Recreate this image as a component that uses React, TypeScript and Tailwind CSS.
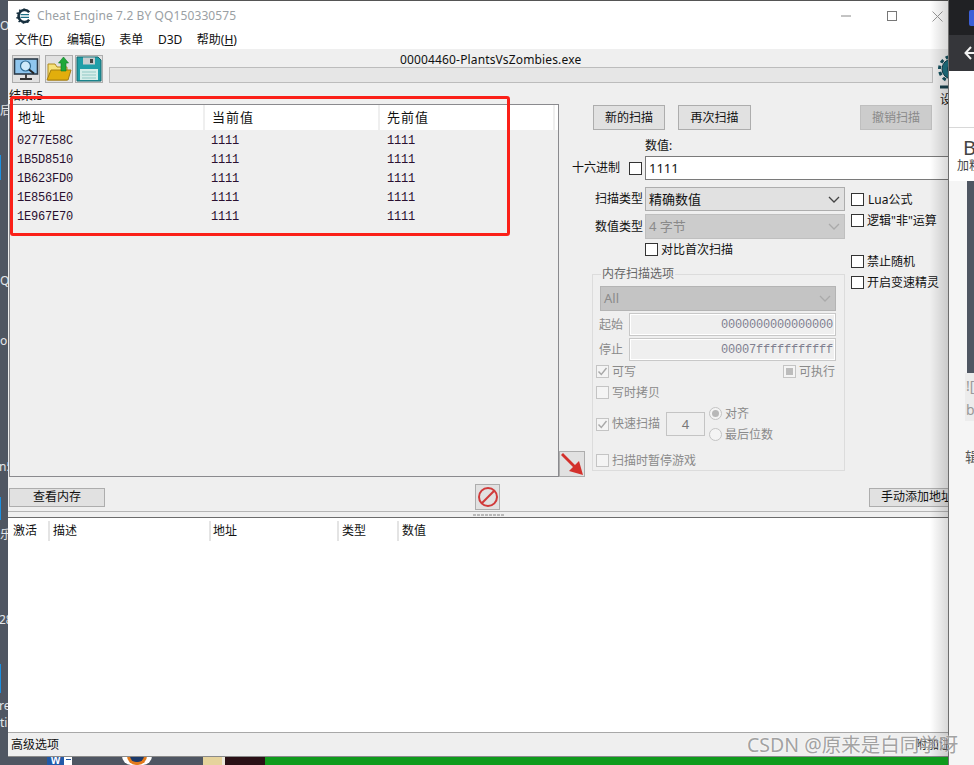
import React from 'react';

const ROWS = ['0277E58C', '1B5D8510', '1B623FD0', '1E8561E0', '1E967E70'];

const Check = ({ mark, off, className = '' }: { mark?: 'tick' | 'square'; off?: boolean; className?: string }) => (
  <span className={`flex h-[13px] w-[13px] shrink-0 items-center justify-center border ${off ? 'border-[#c4c4c4] bg-[#f4f4f4]' : 'border-[#333] bg-white'} ${className}`}>
    {mark === 'tick' && (
      <svg width="11" height="11" viewBox="0 0 11 11" fill="none" stroke="#a8a8a8" strokeWidth="1.4">
        <path d="M1.5 5.5 L4.3 8.5 L9.5 2" />
      </svg>
    )}
    {mark === 'square' && <span className="h-[7px] w-[7px] bg-[#bcbcbc]" />}
  </span>
);

const Btn = ({ children, className = '', off }: { children: React.ReactNode; className?: string; off?: boolean }) => (
  <div className={`flex shrink-0 items-center justify-center border ${off ? 'border-[#bfbfbf] bg-[#cccccc] text-[#8a8a8a]' : 'border-[#adadad] bg-[#e1e1e1] text-[#111]'} ${className}`}>
    {children}
  </div>
);

const Chevron = ({ color }: { color: string }) => (
  <svg width="12" height="7" viewBox="0 0 12 7" fill="none" stroke={color} strokeWidth="1.3" className="ml-auto mr-[4px]">
    <path d="M1 1 L6 6 L11 1" />
  </svg>
);

// the toothed "C" of the Cheat Engine logo
const CeLogo = () => (
  <svg width="16" height="16" viewBox="0 0 16 16" fill="none" className="shrink-0">
    <path d="M13.2 4.2 A6 6 0 1 0 13.2 11.8" stroke="#17303f" strokeWidth="2.6" />
    <path d="M8 0.4 V2 M3.4 1.6 L4.4 3 M0.6 5 L2.2 5.6 M0.4 10 L2 9.6 M2.6 14 L4 12.8 M7.4 15.8 V14 M12 14.8 L11.4 13.4" stroke="#17303f" strokeWidth="1.6" />
    <path d="M4.5 6.6 H13 M4.5 9.4 H13" stroke="#1d6f86" strokeWidth="1.4" />
  </svg>
);

const GearIcon = () => (
  <svg width="28" height="34" viewBox="0 0 28 34" fill="none" className="shrink-0">
    <circle cx="14" cy="14" r="10" fill="#1f7383" stroke="#123f4c" />
    <circle cx="14" cy="14" r="12.5" stroke="#14505e" strokeWidth="3" strokeDasharray="3.5 3" />
    <circle cx="14" cy="14" r="5" fill="#14505e" />
    <path d="M2 32 H26" stroke="#17404c" strokeWidth="3" />
  </svg>
);

const MonitorIcon = () => (
  <svg width="26" height="26" viewBox="0 0 26 26">
    <rect x="1.5" y="3" width="23" height="15" fill="#8fc6ee" stroke="#2b3a48" strokeWidth="1.6" />
    <circle cx="12.5" cy="10" r="5" fill="#cfeafa" stroke="#2e6b94" strokeWidth="1.2" />
    <path d="M16 13.5 L21 17.5" stroke="#222" strokeWidth="2" />
    <path d="M13 18 V22" stroke="#444" strokeWidth="2" />
    <path d="M7 23 H19" stroke="#333" strokeWidth="2" />
  </svg>
);

const FolderIcon = () => (
  <svg width="26" height="26" viewBox="0 0 26 26">
    <path d="M2 8 H9 L11 11 H21 V24 H2 Z" fill="#f6e27a" stroke="#b08a1c" />
    <path d="M1 24 L5 14 H25 L22 24 Z" fill="#e2ae0c" stroke="#a67f10" />
    <path d="M17.5 1 L22.5 7 H20 V15 H15 V7 H12.5 Z" fill="#1fa83a" stroke="#0e7a26" strokeWidth="0.6" />
  </svg>
);

const DiskIcon = () => (
  <svg width="26" height="26" viewBox="0 0 26 26">
    <path d="M1 1 H22 L25 4 V25 H1 Z" fill="#1f9ea8" stroke="#14686e" />
    <rect x="7" y="1.5" width="12" height="7" fill="#c9ced0" />
    <rect x="14" y="3" width="3" height="4" fill="#444" />
    <rect x="4" y="13" width="18" height="11" fill="#d6eeea" />
    <path d="M6 16 H20 M6 19 H20 M6 22 H20" stroke="#8fc8c4" />
  </svg>
);

export default function App() {
  return (
    <div className="relative h-[765px] w-[974px] overflow-hidden bg-[#4f5662] font-['Noto_Sans','Noto_Sans_CJK_SC',sans-serif] text-[12px] leading-none text-[#111]">
      {/* desktop scraps on the left */}
      <div className="absolute left-0 top-0 h-[765px] w-[8px] text-[12px] text-[#e4e6ea]">
        <span className="absolute left-0 top-[20px]">O</span>
        <span className="absolute left-0 top-[105px]">后</span>
        <span className="absolute left-0 top-[275px]">Q</span>
        <span className="absolute left-0 top-[335px]">o</span>
        <span className="absolute left-[-1px] top-[461px]">n5</span>
        <span className="absolute left-0 top-[529px]">乐</span>
        <span className="absolute left-[-1px] top-[614px]">28</span>
        <span className="absolute left-[-1px] top-[700px]">re</span>
        <span className="absolute left-0 top-[717px]">ti</span>
        <span className="absolute left-0 top-[155px] h-[25px] w-[1px] bg-[#1a8fe0]" />
        <span className="absolute left-0 top-[497px] h-[23px] w-[1px] bg-[#1a8fe0]" />
        <span className="absolute left-0 top-[664px] h-[29px] w-[1px] bg-[#1a8fe0]" />
      </div>

      {/* taskbar peeking out under the window */}
      <div className="absolute bottom-0 left-0 flex h-[9px] w-[949px]">
        <div className="ml-[47px] flex w-[25px] gap-[2px] overflow-hidden bg-white">
          <span className="w-[17px] bg-[#2159a8] text-center text-[10px] font-bold leading-[9px] text-white">W</span>
          <span className="mt-[3px] h-[1px] w-[5px] bg-[#2159a8]" />
        </div>
        <div className="ml-[50px] flex w-[30px] items-start justify-center rounded-b-full bg-white">
          <span className="h-[9px] w-[20px] rounded-b-full border-[3px] border-t-0 border-[#e27a1c] bg-[#1d3a6a]" />
        </div>
        <div className="ml-[51px] w-[19px] bg-[#e6d39c]" />
        <div className="w-[3px] bg-[#ece8dc]" />
        <div className="w-[40px] bg-[#2a1016]" />
        <div className="flex-1 bg-[#0f9a1c]" />
      </div>

      {/* browser window behind, right side */}
      <div className="absolute left-[948px] top-0 flex h-[765px] w-[26px] flex-col border-l border-[#6e6e6e] bg-[#f5f5f5] text-[#555]">
        <div className="h-[35px] bg-[#202124] pl-[20px] pt-[10px]">
          <div className="h-[16px] w-[8px] rounded-l-[2px] bg-[#3b5fd8]" />
        </div>
        <div className="flex h-[36px] items-center bg-[#35363a] pl-[15px]">
          <svg width="11" height="14" viewBox="0 0 11 14" fill="none" stroke="#f2f2f2" strokeWidth="2" className="shrink-0">
            <path d="M7 1 L1.5 7 L7 13 M2 7 H12" />
          </svg>
        </div>
        <div className="h-[57px] border-b border-[#d8d8d8] bg-white" />
        <div className="h-[53px] bg-white pl-[14px] pt-[10px] text-[#444]">
          <div className="text-[20px]">B</div>
          <div className="ml-[-6px] mt-[2px] whitespace-nowrap text-[12px]">加粗</div>
        </div>
        <div className="ml-[18px] h-[192px] shrink-0 bg-[#4f5662]" />
        <div className="ml-[16px] h-[48px] shrink-0 whitespace-nowrap bg-[#ececec] pl-[1px] pt-[6px] text-[14px] text-[#999]">
          <div>![</div>
          <div className="mt-[10px]">b</div>
        </div>
        <div className="ml-[16px] mt-[29px] whitespace-nowrap text-[14px]">辑</div>
      </div>

      {/* Cheat Engine window */}
      <div className="absolute left-[8px] top-0 flex h-[757px] w-[940px] flex-col overflow-hidden border-b border-t border-b-[#8a8a8a] border-t-[#555] bg-white">
        <div className="flex h-[30px] shrink-0 items-center pl-[8px]">
          <CeLogo />
          <span className="ml-[5px] text-[12px] tracking-[0.1px] text-[#9aa0a4]">Cheat Engine 7.2 BY QQ150330575</span>
          <svg width="12" height="2" viewBox="0 0 12 2" className="ml-[605px]"><path d="M0 1 H10" stroke="#888" /></svg>
          <svg width="10" height="10" viewBox="0 0 10 10" className="ml-[34px]"><rect x="0.5" y="0.5" width="9" height="9" fill="none" stroke="#777" /></svg>
          <svg width="11" height="11" viewBox="0 0 11 11" className="ml-[35px] shrink-0"><path d="M0.5 0.5 L10.5 10.5 M10.5 0.5 L0.5 10.5" stroke="#999" /></svg>
        </div>
        <div className="flex h-[18px] shrink-0 items-center gap-[14.5px] pl-[7px] text-[12px]">
          <span>文件(<u>F</u>)</span>
          <span>编辑(<u>E</u>)</span>
          <span>表单</span>
          <span>D3D</span>
          <span>帮助(<u>H</u>)</span>
        </div>

        <div className="flex h-[468px] shrink-0 flex-col bg-[#efefef]">
          {/* toolbar */}
          <div className="flex h-[39px] shrink-0 pl-[4px] pt-[6px]">
            <Btn className="h-[28px] w-[28px]"><MonitorIcon /></Btn>
            <Btn className="ml-[5px] h-[28px] w-[28px]"><FolderIcon /></Btn>
            <Btn className="ml-[2px] h-[28px] w-[28px]"><DiskIcon /></Btn>
            <div className="ml-[6px] flex w-[824px] shrink-0 flex-col">
              <span className="ml-[291px] mt-[-1px] h-[13px] text-[12px] leading-[12px] tracking-[0.15px]">00004460-PlantsVsZombies.exe</span>
              <div className="h-[16px] w-full border border-[#bcbcbc] bg-[#e6e6e6]" />
            </div>
            <div className="ml-[5px] flex w-[28px] shrink-0 flex-col">
              <GearIcon />
              <span className="mt-[5px] whitespace-nowrap pl-[2px]">设置</span>
            </div>
          </div>
          <div className="h-[16px] shrink-0 pl-[1px] pt-[1px] leading-[14px]">结果:5</div>

          {/* found list + scan controls */}
          <div className="flex h-[373px] shrink-0">
            <div className="ml-[1px] flex w-[550px] shrink-0 flex-col border border-[#8a8a8e]">
              <div className="flex h-[25px] shrink-0 bg-white text-[13px] tracking-[1px]">
                <div className="flex w-[195px] items-center border-r-2 border-[#efefef] pl-[8px]">地址</div>
                <div className="flex w-[175px] items-center border-r-2 border-[#efefef] pl-[7px]">当前值</div>
                <div className="flex w-[175px] items-center border-r-2 border-[#efefef] pl-[7px]">先前值</div>
              </div>
              <div className="pt-[1px] font-['Liberation_Mono',monospace] text-[12px] tracking-[-0.2px] text-[#2a1030]">
                {ROWS.map((addr) => (
                  <div key={addr} className="flex h-[19px] items-center">
                    <span className="w-[195px] pl-[7px]">{addr}</span>
                    <span className="w-[175px] pl-[6px]">1111</span>
                    <span className="pl-[7px]">1111</span>
                  </div>
                ))}
              </div>
            </div>

            <div className="w-[389px] shrink-0 overflow-hidden">
              <div className="ml-[34px] mt-[1px] flex">
                <Btn className="h-[25px] w-[72px]">新的扫描</Btn>
                <Btn className="ml-[13px] h-[25px] w-[73px]">再次扫描</Btn>
                <Btn off className="ml-[109px] h-[25px] w-[72px]">撤销扫描</Btn>
              </div>

              <div className="mt-[10px] flex items-end">
                <div className="flex h-[24px] w-[86px] shrink-0 items-center pl-[13px]">
                  <span className="whitespace-nowrap">十六进制</span>
                  <Check className="ml-[9px]" />
                </div>
                <div className="w-[310px] shrink-0">
                  <div className="h-[16px]">数值:</div>
                  <div className="flex h-[24px] items-center border border-[#7a7a7a] bg-white pl-[3px] text-[13px]">1111</div>
                </div>
              </div>

              <div className="mt-[7px] flex">
                <div className="w-[286px] shrink-0">
                  <div className="flex h-[24px] items-center">
                    <span className="ml-[36px] w-[50px] whitespace-nowrap">扫描类型</span>
                    <div className="flex h-[24px] w-[200px] items-center border border-[#adadad] bg-[#e1e1e1] pl-[3px] text-[13px]">
                      精确数值
                      <Chevron color="#444" />
                    </div>
                  </div>
                  <div className="mt-[3px] flex h-[25px] items-center">
                    <span className="ml-[36px] w-[50px] whitespace-nowrap">数值类型</span>
                    <div className="flex h-[25px] w-[200px] items-center border border-[#bfbfbf] bg-[#cccccc] pl-[3px] text-[13px] text-[#8a8a8a]">
                      4 字节
                      <Chevron color="#aaa" />
                    </div>
                  </div>
                  <div className="ml-[86px] mt-[4px] flex h-[13px] items-center">
                    <Check />
                    <span className="ml-[3px]">对比首次扫描</span>
                  </div>

                  <div className="flex items-end">
                    <Btn className="h-[26px] w-[26px]">
                      <svg width="24" height="24" viewBox="0 0 24 24">
                        <path d="M1 3 L3 1 L15 13 L19 9 L23 23 L9 19 L13 15 Z" fill="#d3302c" />
                      </svg>
                    </Btn>
                    <div className="relative mb-[6px] ml-[7px] mt-[18px] h-[197px] w-[253px] whitespace-nowrap border border-[#dcdcdc] text-[#8a8a8a]">
                      <span className="absolute left-[8px] top-[-7px] bg-[#efefef] px-[1px] text-[#666]">内存扫描选项</span>
                      <div className="ml-[7px] mt-[11px] flex h-[25px] w-[236px] items-center border border-[#b4b4b4] bg-[#c4c4c4] pl-[3px] text-[13px]">
                        All
                        <Chevron color="#aaa" />
                      </div>
                      <div className="mt-[2px] flex h-[23px] items-center">
                        <span className="ml-[6px] w-[30px]">起始</span>
                        <div className="flex h-[23px] w-[207px] items-center justify-end border border-[#c8c8c8] pr-[2px] font-['Liberation_Mono',monospace] text-[12px] tracking-[-0.2px] text-[#808090] shadow-[inset_0_0_0_1px_#ffffff]">0000000000000000</div>
                      </div>
                      <div className="mt-[2px] flex h-[23px] items-center">
                        <span className="ml-[6px] w-[30px]">停止</span>
                        <div className="flex h-[23px] w-[207px] items-center justify-end border border-[#c8c8c8] pr-[2px] font-['Liberation_Mono',monospace] text-[12px] tracking-[-0.2px] text-[#808090] shadow-[inset_0_0_0_1px_#ffffff]">00007fffffffffff</div>
                      </div>
                      <div className="mt-[4px] flex h-[13px] items-center pl-[3px]">
                        <Check off mark="tick" />
                        <span className="ml-[3px]">可写</span>
                        <Check off mark="square" className="ml-[147px]" />
                        <span className="ml-[3px]">可执行</span>
                      </div>
                      <div className="mt-[8px] flex h-[13px] items-center pl-[3px]">
                        <Check off />
                        <span className="ml-[3px]">写时拷贝</span>
                      </div>
                      <div className="mt-[8px] flex h-[34px] items-center pl-[3px]">
                        <Check off mark="tick" />
                        <span className="ml-[3px]">快速扫描</span>
                        <div className="ml-[6px] flex h-[24px] w-[39px] items-center justify-center border border-[#c4c4c4] text-[13px] text-[#777]">4</div>
                        <div className="ml-[4px] flex flex-col gap-[8px]">
                          <div className="flex h-[13px] items-center">
                            <span className="flex h-[13px] w-[13px] items-center justify-center rounded-full border border-[#c4c4c4] bg-[#f4f4f4]">
                              <span className="h-[7px] w-[7px] rounded-full bg-[#b8b8b8]" />
                            </span>
                            <span className="ml-[3px]">对齐</span>
                          </div>
                          <div className="flex h-[13px] items-center">
                            <span className="h-[13px] w-[13px] rounded-full border border-[#c4c4c4] bg-[#f4f4f4]" />
                            <span className="ml-[3px]">最后位数</span>
                          </div>
                        </div>
                      </div>
                      <div className="mt-[13px] flex h-[13px] items-center pl-[3px]">
                        <Check off />
                        <span className="ml-[3px]">扫描时暂停游戏</span>
                      </div>
                    </div>
                  </div>
                </div>

                <div className="ml-[6px] w-[97px] shrink-0 whitespace-nowrap">
                  <div className="mt-[6px] flex h-[13px] items-center"><Check /><span className="ml-[4px]">Lua公式</span></div>
                  <div className="mt-[8px] flex h-[13px] items-center"><Check /><span className="ml-[3px]">逻辑"非"运算</span></div>
                  <div className="mt-[28px] flex h-[13px] items-center"><Check /><span className="ml-[3px]">禁止随机</span></div>
                  <div className="mt-[8px] flex h-[13px] items-center"><Check /><span className="ml-[3px]">开启变速精灵</span></div>
                </div>
              </div>
            </div>
          </div>

          {/* button row under the list */}
          <div className="mt-[7px] flex h-[26px] shrink-0 items-center pl-[1px]">
            <Btn className="h-[19px] w-[96px]">查看内存</Btn>
            <Btn className="ml-[370px] h-[26px] w-[25px]">
              <svg width="22" height="22" viewBox="0 0 22 22" fill="none" stroke="#d03a3a" strokeWidth="2">
                <circle cx="11" cy="11" r="9" />
                <path d="M4.8 17.2 L17.2 4.8" />
              </svg>
            </Btn>
            <Btn className="ml-[369px] h-[19px] w-[100px] justify-start whitespace-nowrap pl-[11px]">手动添加地址</Btn>
          </div>
          <div className="mt-[1px] flex h-[6px] shrink-0 justify-start gap-[1px] border-t border-[#b4b4b4] pl-[465px] pt-[2px]">
            {[0, 1, 2, 3, 4, 5, 6, 7].map((i) => (
              <span key={i} className="h-[2px] w-[3px] bg-[#b8b8b8]" />
            ))}
          </div>
        </div>

        {/* address list */}
        <div className="flex flex-1 flex-col border-t border-[#6b6b6b] bg-white">
          <div className="mt-[3px] flex h-[20px] shrink-0">
            <div className="flex w-[42px] items-center border-r-2 border-[#e4e4e4] pl-[5px]">激活</div>
            <div className="flex w-[161px] items-center border-r-2 border-[#e4e4e4] pl-[3px]">描述</div>
            <div className="flex w-[128px] items-center border-r-2 border-[#e4e4e4] pl-[2px]">地址</div>
            <div className="flex w-[60px] items-center border-r-2 border-[#e4e4e4] pl-[3px]">类型</div>
            <div className="flex items-center pl-[3px]">数值</div>
          </div>
        </div>

        <div className="flex h-[24px] shrink-0 items-center whitespace-nowrap border-t border-[#a8a8a8] bg-[#efefef] pl-[3px]">
          <span>高级选项</span>
          <span className="ml-[856px]">附加注释</span>
        </div>
      </div>

      {/* window drop shadow over the right edge */}
      <div className="pointer-events-none absolute left-[930px] top-0 h-[757px] w-[18px] bg-gradient-to-r from-transparent to-black/15" />

      {/* red annotation */}
      <div className="pointer-events-none absolute left-[10px] top-[96px] h-[140px] w-[500px] rounded-[3px] border-[3px] border-[#fb2018]" />

      {/* watermark */}
      <div className="pointer-events-none absolute left-[747px] top-[734px] whitespace-nowrap text-[19.5px] leading-[22px] text-[#8a8a8a]/80 [text-shadow:0_0_2px_#ffffff]">
        CSDN @原来是白同学呀
      </div>
    </div>
  );
}
